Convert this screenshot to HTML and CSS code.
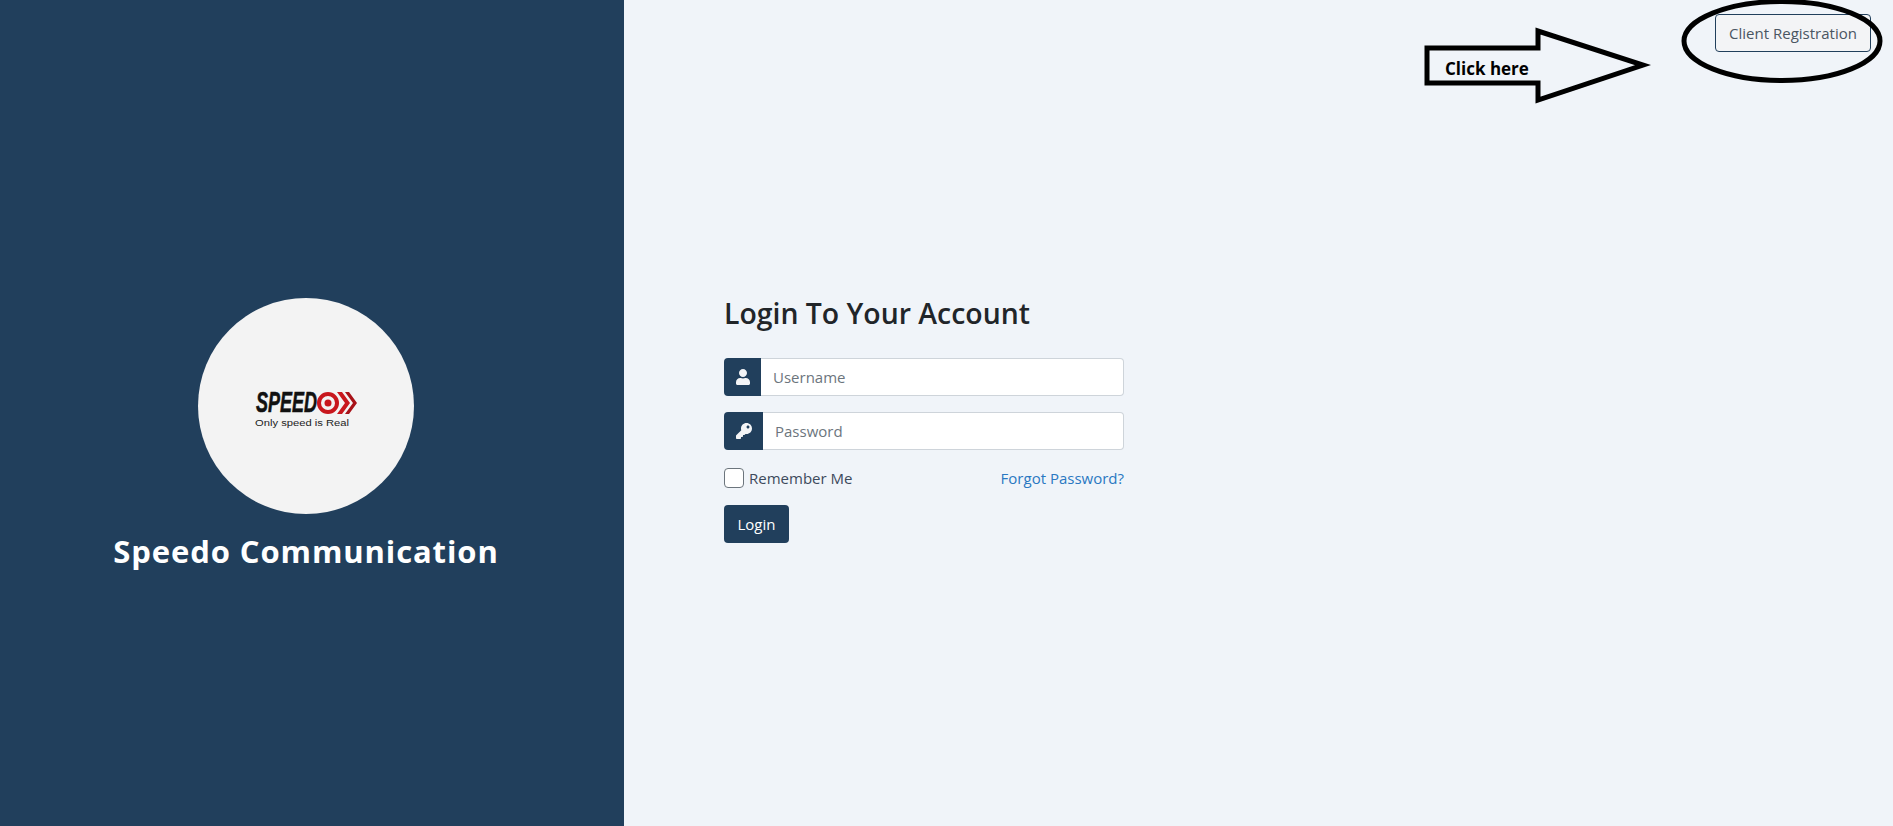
FILE: index.html
```html
<!DOCTYPE html>
<html lang="en">
<head>
    <meta charset="UTF-8">
    <meta name="viewport" content="width=device-width, initial-scale=1.0">
    <title>Login</title>
    <link rel="stylesheet" href="styles.css">
</head>
<body>
    <div class="brand">
        <div class="brand__circle">
            <svg class="brand__logo" viewBox="0 0 102 40" width="102" height="40">
                <text class="brand__logo-name" x="1" y="24" textLength="61" lengthAdjust="spacingAndGlyphs">SPEED</text>
                <circle cx="73" cy="15" r="9" fill="none" stroke="#c8171d" stroke-width="4"/>
                <circle cx="73" cy="15" r="3.5" fill="#c8171d"/>
                <path d="M82 4h5l8 11-8 11h-5l8-11z" fill="#c8171d"/>
                <path d="M90 4h4l8 11-8 11h-4l8-11z" fill="#a81218"/>
                <text class="brand__logo-tag" x="0" y="37.5" textLength="94" lengthAdjust="spacingAndGlyphs">Only speed is Real</text>
            </svg>
        </div>
        <h1 class="brand__title">Speedo Communication</h1>
    </div>

    <div class="main">
        <div class="topbar">
            <button class="topbar__button">Client Registration</button>
        </div>

        <form class="login">
            <h2 class="login__heading">Login To Your Account</h2>
            <div class="field">
                <span class="field__icon">
                    <svg viewBox="0 0 448 512" width="14" height="16"><path d="M224 256c70.7 0 128-57.3 128-128S294.7 0 224 0 96 57.3 96 128s57.3 128 128 128zm89.6 32h-16.7c-22.2 10.2-46.9 16-72.9 16s-50.6-5.8-72.9-16h-16.7C60.2 288 0 348.2 0 422.4V464c0 26.5 21.5 48 48 48h352c26.5 0 48-21.5 48-48v-41.6c0-74.2-60.2-134.4-134.4-134.4z"/></svg>
                </span>
                <input class="field__input" type="text" placeholder="Username">
            </div>
            <div class="field">
                <span class="field__icon field__icon--wide">
                    <svg viewBox="0 0 512 512" width="16" height="16"><path d="M512 176.001C512 273.203 433.202 352 336 352c-11.22 0-22.19-1.062-32.827-3.069l-24.012 27.014A23.999 23.999 0 0 1 261.223 384H224v40c0 13.255-10.745 24-24 24h-40v40c0 13.255-10.745 24-24 24H24c-13.255 0-24-10.745-24-24v-78.059c0-6.365 2.529-12.47 7.029-16.971l161.802-161.802C163.108 213.814 160 195.271 160 176 160 78.798 238.797.001 335.999 0 433.488-.001 512 78.511 512 176.001zM336 128c0 26.51 21.49 48 48 48s48-21.49 48-48-21.49-48-48-48-48 21.49-48 48z"/></svg>
                </span>
                <input class="field__input" type="password" placeholder="Password">
            </div>
            <div class="login__options">
                <label class="login__remember">
                    <input class="login__check" type="checkbox">
                    Remember Me
                </label>
                <a class="login__forgot" href="#">Forgot Password?</a>
            </div>
            <button class="login__button" type="button">Login</button>
        </form>
    </div>

    <!-- hand drawn note on top of the page -->
    <div class="note">
        <svg class="note__marks" viewBox="0 0 480 110" width="480" height="110">
            <path d="M27 48H138V31L243 65 138 100 138 83H27Z" fill="none" stroke="#000" stroke-width="5"/>
            <ellipse cx="382" cy="41" rx="98" ry="39.5" fill="none" stroke="#000" stroke-width="5"/>
        </svg>
        <span class="note__text">Click here</span>
    </div>
</body>
</html>
```

FILE: styles.css
```css
* {
    margin: 0;
    padding: 0;
    box-sizing: border-box;
    font-family: "Open Sans", "Noto Sans", sans-serif;
}

html, body {
    height: 100%;
}

body {
    display: flex;
    background-color: #f0f4f9;
    color: #212529;
    overflow: hidden;
}

.brand {
    width: 624px;
    flex-shrink: 0;
    background-color: #213f5c;
    display: flex;
    flex-direction: column;
    align-items: center;
    padding: 298px 12px 0 0;
}

.brand__circle {
    width: 216px;
    height: 216px;
    border-radius: 50%;
    background-color: #f3f3f3;
    display: flex;
    justify-content: center;
    align-items: center;
}

.brand__logo {
    display: block;
    margin-top: 4px;
    overflow: visible;
}

.brand__logo-name {
    font-family: "Liberation Sans", sans-serif;
    font-size: 29px;
    font-weight: bold;
    font-style: italic;
    fill: #111;
    stroke: #111;
    stroke-width: 0.6;
}

.brand__logo-tag {
    font-family: "Liberation Sans", sans-serif;
    font-size: 8.5px;
    fill: #222;
}

.brand__title {
    margin-top: 15px;
    font-size: 31px;
    line-height: 44px;
    font-weight: 700;
    letter-spacing: 0.9px;
    color: #fff;
}

.main {
    flex: 1;
    display: flex;
    flex-direction: column;
}

.topbar {
    display: flex;
    justify-content: flex-end;
    padding: 14px 22px 0 0;
}

.topbar__button {
    width: 156px;
    height: 38px;
    background-color: #f3f4f6;
    border: 1px solid #213f5c;
    border-radius: 4px;
    font-size: 15px;
    color: #4a5662;
}

.login {
    width: 400px;
    margin: 242px 0 0 100px;
}

.login__heading {
    font-size: 28.4px;
    line-height: 38px;
    font-weight: 600;
    margin-bottom: 26px;
}

.field {
    display: flex;
    height: 38px;
    margin-bottom: 16px;
}

.field__icon {
    width: 37px;
    background-color: #213f5c;
    border-radius: 4px 0 0 4px;
    display: flex;
    justify-content: center;
    align-items: center;
    fill: #f3f4f6;
}

.field__icon--wide {
    width: 39px;
}

.field__input {
    flex: 1;
    min-width: 0;
    padding: 0 12px;
    border: 1px solid #ced4da;
    border-left: none;
    border-radius: 0 4px 4px 0;
    background-color: #fff;
    font-size: 15px;
}

.field__input::placeholder {
    color: #6c757d;
    opacity: 1;
}

.login__options {
    display: flex;
    justify-content: space-between;
    align-items: center;
    height: 24px;
    margin-top: 16px;
    font-size: 15px;
}

.login__remember {
    display: flex;
    align-items: center;
    gap: 5px;
    color: #3d4a5c;
}

.login__check {
    appearance: none;
    width: 20px;
    height: 20px;
    background-color: #fff;
    border: 1px solid #6c757d;
    border-radius: 4px;
}

.login__forgot {
    color: #2a78c2;
    text-decoration: none;
}

.login__button {
    display: block;
    margin-top: 15px;
    width: 65px;
    height: 38px;
    background-color: #213f5c;
    border: none;
    border-radius: 4px;
    color: #fff;
    font-size: 15px;
}

.note {
    position: absolute;
    top: 0;
    left: 1400px;
    width: 480px;
    height: 110px;
    pointer-events: none;
}

.note__marks {
    display: block;
    overflow: visible;
}

.note__text {
    position: absolute;
    left: 45px;
    top: 56px;
    font-size: 17px;
    line-height: 26px;
    font-weight: 700;
    color: #000;
}
```
